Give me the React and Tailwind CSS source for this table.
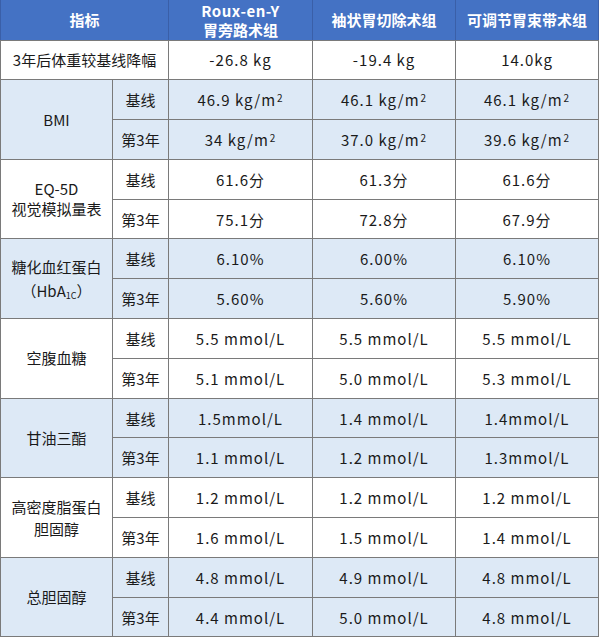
import React from "react";

const F = { fontFamily: '"Noto Sans CJK SC", "Noto Sans", sans-serif' };

const Sup = () => <sup className="text-[10px] relative -top-[4px] ml-[1px]">2</sup>;

const groups = [
  { name: ["BMI"], light: true, rows: [["基线", <>46.9 kg/m<Sup /></>, <>46.1 kg/m<Sup /></>, <>46.1 kg/m<Sup /></>], ["第3年", <>34 kg/m<Sup /></>, <>37.0 kg/m<Sup /></>, <>39.6 kg/m<Sup /></>]] },
  { name: ["EQ-5D", "视觉模拟量表"], light: false, lh: "leading-[20px]", rows: [["基线", "61.6分", "61.3分", "61.6分"], ["第3年", "75.1分", "72.8分", "67.9分"]] },
  { name: ["糖化血红蛋白", <>（HbA<sub className="text-[9px]">1C</sub>）</>], light: true, lh: "leading-[24px]", rows: [["基线", "6.10%", "6.00%", "6.10%"], ["第3年", "5.60%", "5.60%", "5.90%"]] },
  { name: ["空腹血糖"], light: false, rows: [["基线", "5.5 mmol/L", "5.5 mmol/L", "5.5 mmol/L"], ["第3年", "5.1 mmol/L", "5.0 mmol/L", "5.3 mmol/L"]] },
  { name: ["甘油三酯"], light: true, rows: [["基线", "1.5mmol/L", "1.4 mmol/L", "1.4mmol/L"], ["第3年", "1.1 mmol/L", "1.2 mmol/L", "1.3mmol/L"]] },
  { name: ["高密度脂蛋白", "胆固醇"], light: false, rows: [["基线", "1.2 mmol/L", "1.2 mmol/L", "1.2 mmol/L"], ["第3年", "1.6 mmol/L", "1.5 mmol/L", "1.4 mmol/L"]] },
  { name: ["总胆固醇"], light: true, rows: [["基线", "4.8 mmol/L", "4.9 mmol/L", "4.8 mmol/L"], ["第3年", "4.4 mmol/L", "5.0 mmol/L", "4.8 mmol/L"]] },
];

const td = "border border-[#7a7a7a] text-center align-middle p-0 leading-[19px]";
const num = "tracking-[1px]";

export default function App() {
  return (
    <div className="bg-white w-[600px] h-[639px]" style={F}>
      <table className="table-fixed border-collapse w-[598px] text-[15px] text-[#1a1a1a]">
        <colgroup>
          <col className="w-[112px]" />
          <col className="w-[56px]" />
          <col className="w-[144px]" />
          <col className="w-[143px]" />
          <col className="w-[143px]" />
        </colgroup>
        <tbody>
          <tr className="h-[40px] bg-[#4472c4] text-white font-bold">
            <td colSpan={2} className={`${td} border-t-0 border-x-[#3a5fa8]`}>指标</td>
            <td className={`${td} border-t-0 border-x-[#3a5fa8]`}>
              <div className="tracking-[0.5px]">Roux-en-Y</div>
              <div>胃旁路术组</div>
            </td>
            <td className={`${td} border-t-0 border-x-[#3a5fa8]`}>袖状胃切除术组</td>
            <td className={`${td} border-t-0 border-x-[#3a5fa8]`}>可调节胃束带术组</td>
          </tr>
          <tr className="h-[39.8px] bg-white">
            <td colSpan={2} className={td}>3年后体重较基线降幅</td>
            <td className={`${td} ${num}`}>-26.8 kg</td>
            <td className={`${td} ${num}`}>-19.4 kg</td>
            <td className={`${td} ${num}`}>14.0kg</td>
          </tr>
          {groups.map((g, gi) =>
            g.rows.map((r, ri) => (
              <tr key={`${gi}-${ri}`} className={`h-[39.8px] ${g.light ? "bg-[#dde9f6]" : "bg-white"}`}>
                {ri === 0 && (
                  <td rowSpan={2} className={`${td} ${g.lh || "leading-[22px]"}`}>
                    {g.name.map((n, i) => (
                      <div key={i}>{n}</div>
                    ))}
                  </td>
                )}
                <td className={td}>{r[0]}</td>
                <td className={`${td} ${num}`}>{r[1]}</td>
                <td className={`${td} ${num}`}>{r[2]}</td>
                <td className={`${td} ${num}`}>{r[3]}</td>
              </tr>
            ))
          )}
        </tbody>
      </table>
    </div>
  );
}
